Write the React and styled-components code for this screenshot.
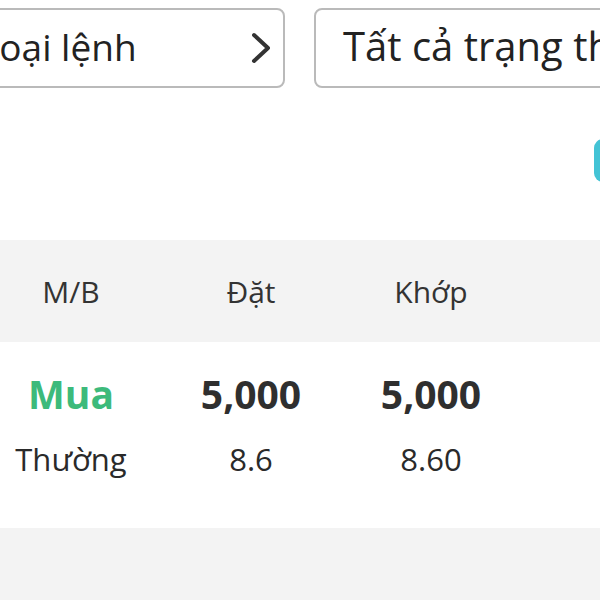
import React from "react";
import styled, { createGlobalStyle } from "styled-components";

const GlobalStyle = createGlobalStyle`
  html, body {
    margin: 0;
    padding: 0;
    background: #ffffff;
    overflow: hidden;
  }
  body {
    font-family: "Open Sans", "Noto Sans", sans-serif;
    color: #2a2a2a;
  }
`;

const Page = styled.div`
  width: 600px;
  height: 600px;
  overflow: hidden;
  background: #ffffff;
`;

const FilterBar = styled.div`
  display: flex;
  gap: 29px;
  padding-top: 8px;
  margin-left: -50px;
`;

const SelectBox = styled.div`
  flex: none;
  box-sizing: border-box;
  width: ${(p) => p.$w}px;
  height: 80px;
  border: 2px solid #bababa;
  border-radius: 8px;
  display: flex;
  align-items: center;
  justify-content: space-between;
  padding: 0 11px 0 ${(p) => p.$pl || 28}px;
  font-size: ${(p) => p.$size || 37}px;
  color: #222;
  white-space: nowrap;
  overflow: hidden;
`;

const SelectLabel = styled.span`
  line-height: 1;
  padding-bottom: 4px;
`;

const Chevron = styled.svg`
  flex: none;
  width: 22px;
  height: 32px;
`;

const Toolbar = styled.div`
  height: 152px;
  display: flex;
  justify-content: flex-end;
  align-items: flex-start;
`;

const TealTab = styled.div`
  width: 40px;
  height: 43px;
  margin-top: 51px;
  margin-right: -34px;
  background: #43c3d5;
  border-radius: 9px;
`;

const Band = styled.div`
  background: ${(p) => (p.$gray ? "#f3f3f3" : "#ffffff")};
  height: ${(p) => p.$h}px;
`;

const Grid = styled.div`
  display: grid;
  grid-template-columns: repeat(4, 180px);
  margin-left: -19px;
  height: 100%;
`;

const HeadCell = styled.div`
  text-align: center;
  font-size: 30px;
  line-height: 102px;
  padding-top: 1px;
  color: #333;
`;

const BodyCell = styled.div`
  display: flex;
  flex-direction: column;
  align-items: center;
  padding-top: 26px;
  gap: 18px;
`;

const Primary = styled.div`
  font-size: 39px;
  font-weight: 700;
  line-height: 52px;
  color: ${(p) => p.$color || "#2f2f2f"};
`;

const Secondary = styled.div`
  font-size: 31px;
  line-height: 42px;
  color: #2a2a2a;
`;

const rows = [
  { a: "Mua", aColor: "#3dba7b", b: "Thường" },
  { a: "5,000", b: "8.6" },
  { a: "5,000", b: "8.60" },
];

export default function App() {
  return (
    <Page>
      <GlobalStyle />
      <FilterBar>
        <SelectBox $w={335}>
          <SelectLabel>Loại lệnh</SelectLabel>
          <Chevron viewBox="0 0 22 32">
            <polyline
              points="4,3 18,16 4,29"
              fill="none"
              stroke="#333"
              strokeWidth="4"
              strokeLinecap="round"
              strokeLinejoin="round"
            />
          </Chevron>
        </SelectBox>
        <SelectBox $w={340} $size={40} $pl={27}>
          <SelectLabel>Tất cả trạng thái</SelectLabel>
        </SelectBox>
      </FilterBar>
      <Toolbar>
        <TealTab />
      </Toolbar>
      <Band $gray $h={102}>
        <Grid>
          <HeadCell>M/B</HeadCell>
          <HeadCell>Đặt</HeadCell>
          <HeadCell>Khớp</HeadCell>
          <HeadCell />
        </Grid>
      </Band>
      <Band $h={186}>
        <Grid>
          {rows.map((r, i) => (
            <BodyCell key={i}>
              <Primary $color={r.aColor}>{r.a}</Primary>
              <Secondary>{r.b}</Secondary>
            </BodyCell>
          ))}
        </Grid>
      </Band>
      <Band $gray $h={72} />
    </Page>
  );
}
